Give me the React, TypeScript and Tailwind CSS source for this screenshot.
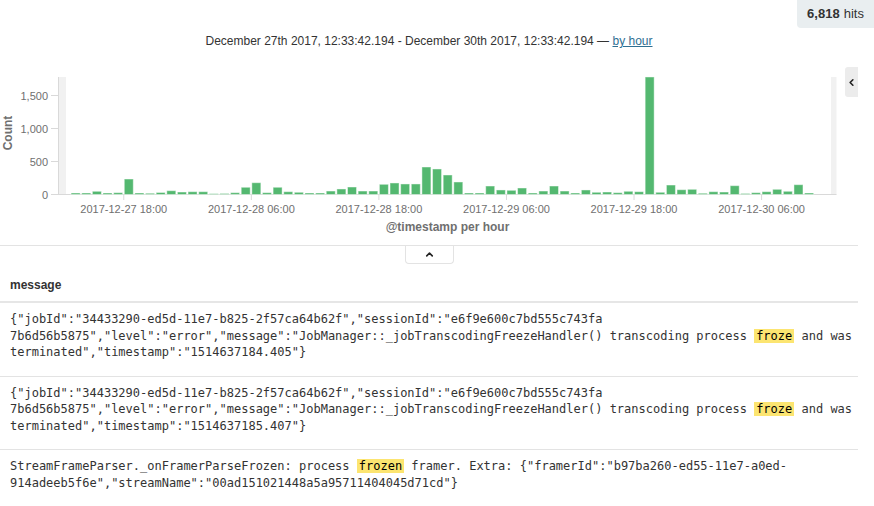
import { ChevronLeft, ChevronUp } from "lucide-react"

// hourly counts, Dec 27 12:00 -> Dec 30 12:00
const counts = [
  0, 15, 15, 41, 15, 20, 227, 15, 11, 23, 50, 30, 35, 35, 5, 8, 20, 102, 171, 20,
  102, 35, 26, 15, 15, 45, 76, 106, 45, 45, 147, 167, 152, 152, 409, 379, 288, 182, 15, 15,
  121, 61, 56, 91, 15, 45, 121, 45, 15, 61, 26, 30, 20, 41, 35, 1773, 26, 136, 65, 71,
  11, 35, 30, 126, 8, 20, 35, 71, 41, 141, 15, 0, 0,
]

const BASE = 134.5
const SCALE = 33 / 500
const STEP = 10.63
const X0 = 60

const xTicks = [
  { i: 6, label: "2017-12-27 18:00" },
  { i: 18, label: "2017-12-28 06:00" },
  { i: 30, label: "2017-12-28 18:00" },
  { i: 42, label: "2017-12-29 06:00" },
  { i: 54, label: "2017-12-29 18:00" },
  { i: 66, label: "2017-12-30 06:00" },
]

const yTicks = [0, 500, 1000, 1500]

const rows = [
  [
    '{"jobId":"34433290-ed5d-11e7-b825-2f57ca64b62f","sessionId":"e6f9e600c7bd555c743fa',
    '7b6d56b5875","level":"error","message":"JobManager::_jobTranscodingFreezeHandler() transcoding process [[froze]] and was',
    'terminated","timestamp":"1514637184.405"}',
  ],
  [
    '{"jobId":"34433290-ed5d-11e7-b825-2f57ca64b62f","sessionId":"e6f9e600c7bd555c743fa',
    '7b6d56b5875","level":"error","message":"JobManager::_jobTranscodingFreezeHandler() transcoding process [[froze]] and was',
    'terminated","timestamp":"1514637185.407"}',
  ],
  [
    'StreamFrameParser._onFramerParseFrozen: process [[frozen]] framer. Extra: {"framerId":"b97ba260-ed55-11e7-a0ed-',
    '914adeeb5f6e","streamName":"00ad151021448a5a95711404045d71cd"}',
  ],
]

function Line({ text }: { text: string }) {
  const parts = text.split(/\[\[(.+?)\]\]/)
  return (
    <div className="whitespace-pre">
      {parts.map((p, i) =>
        i % 2 === 1 ? (
          <mark key={i} className="bg-[#fce571] text-black px-[2px]">
            {p}
          </mark>
        ) : (
          <span key={i}>{p}</span>
        )
      )}
    </div>
  )
}

function Histogram() {
  const font = "Liberation Sans, Arial, sans-serif"
  return (
    <svg width={845} height={185} className="block shrink-0">
      {/* out of range strips */}
      <rect x={59} y={17} width={7} height={BASE - 17} fill="#f1f1f1" />
      <rect x={831} y={17} width={5.5} height={BASE - 17} fill="#f1f1f1" />
      <line x1={58.5} y1={17} x2={58.5} y2={BASE} stroke="#d9d9d9" />
      <line x1={58} y1={BASE} x2={836.5} y2={BASE} stroke="#d9d9d9" />

      {yTicks.map((v) => {
        const y = BASE - v * SCALE
        return (
          <g key={v}>
            <line x1={51} y1={y} x2={58} y2={y} stroke="#d9d9d9" />
            <text x={48} y={y + 4} textAnchor="end" fontSize={11} fill="#6f6f6f" fontFamily={font}>
              {v.toLocaleString("en-US")}
            </text>
          </g>
        )
      })}

      {counts.map((c, i) =>
        c > 0 ? (
          <rect
            key={i}
            x={X0 + i * STEP + 0.5}
            y={BASE - c * SCALE - 0.5}
            width={9}
            height={c * SCALE + 0.5}
            fill="#54b870"
            stroke="#ffffff"
            strokeOpacity={0.45}
          />
        ) : null
      )}

      {xTicks.map((t) => {
        const x = X0 + t.i * STEP
        return (
          <g key={t.i}>
            <line x1={x} y1={BASE} x2={x} y2={BASE + 5.5} stroke="#d9d9d9" />
            <text x={x} y={BASE + 18} textAnchor="middle" fontSize={11} fill="#6f6f6f" fontFamily={font}>
              {t.label}
            </text>
          </g>
        )
      })}

      <text x={447.5} y={BASE + 36} textAnchor="middle" fontSize={12} fontWeight="bold" fill="#6f6f6f" fontFamily={font}>
        @timestamp per hour
      </text>
      <text
        x={12}
        y={73}
        textAnchor="middle"
        fontSize={12}
        fontWeight="bold"
        fill="#6f6f6f"
        fontFamily={font}
        transform="rotate(-90 12 73)"
      >
        Count
      </text>
    </svg>
  )
}

export default function App() {
  return (
    <div className="w-[874px] h-[506px] overflow-hidden bg-white text-[#333] font-['Liberation_Sans',Arial,sans-serif]">
      {/* hits */}
      <div className="flex justify-end">
        <div className="h-[28px] w-[77px] flex items-center justify-center bg-[#e9eef0] rounded-bl-[4px] text-[13px]">
          <span className="font-bold">6,818</span>
          <span className="ml-[4px]">hits</span>
        </div>
      </div>

      <div className="w-[858px]">
        {/* time range */}
        <div className="h-[32px] pt-[5px] text-center text-[12px] leading-[16px]">
          December 27th 2017, 12:33:42.194 - December 30th 2017, 12:33:42.194 —{" "}
          <a className="text-[#2f6f92] underline">by hour</a>
        </div>

        {/* chart */}
        <div className="flex">
          <Histogram />
          <div className="mt-[7px] w-[13px] h-[30px] bg-[#ececec] rounded-l-[3px] flex items-center justify-center">
            <ChevronLeft className="w-[11px] h-[11px] text-[#222]" strokeWidth={3.5} />
          </div>
        </div>

        {/* collapse tab */}
        <div className="border-t border-[#e3e3e3]">
          <div className="ml-[405px] w-[49px] h-[18px] border-x border-b border-[#e3e3e3] rounded-b-[4px] flex items-center justify-center">
            <ChevronUp className="w-[11px] h-[11px] text-[#222]" strokeWidth={3.5} />
          </div>
        </div>

        {/* doc table */}
        <div className="pt-[13px] pb-[8px] px-[10px] border-b-2 border-[#e6e6e6] text-[12px] leading-[16px] font-bold">
          message
        </div>
        {rows.map((lines, r) => (
          <div
            key={r}
            className="px-[10px] pt-[8px] pb-[15px] border-b border-[#e3e3e3] last:border-b-0 font-['DejaVu_Sans_Mono',monospace] text-[12px] leading-[16.5px]"
          >
            {lines.map((l, i) => (
              <Line key={i} text={l} />
            ))}
          </div>
        ))}
      </div>
    </div>
  )
}
